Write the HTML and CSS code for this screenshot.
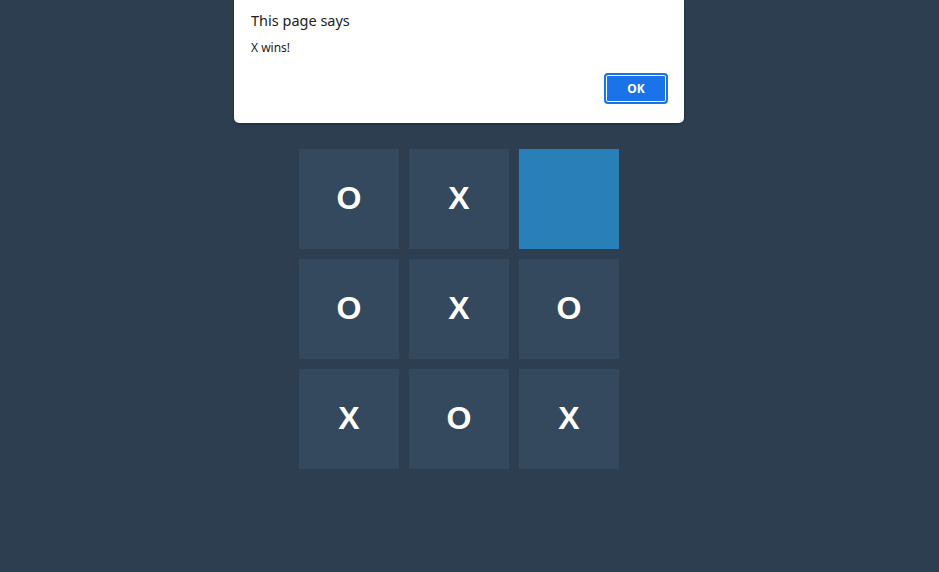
FILE: index.html
```html
<!DOCTYPE html>
<html>
<head>
<meta charset="utf-8">
<link rel="stylesheet" href="styles.css">
</head>
<body>
<main class="page">
  <div class="board">
    <div class="cell">O</div>
    <div class="cell">X</div>
    <div class="cell cell--active"></div>
    <div class="cell">O</div>
    <div class="cell">X</div>
    <div class="cell">O</div>
    <div class="cell">X</div>
    <div class="cell">O</div>
    <div class="cell">X</div>
  </div>
</main>
<div class="dialog">
  <div class="dialog__title">This page says</div>
  <div class="dialog__msg">X wins!</div>
  <div class="dialog__actions">
    <button class="dialog__ok">OK</button>
  </div>
</div>
</body>
</html>
```
FILE: styles.css
```css
html, body {
  margin: 0;
  padding: 0;
  height: 100%;
}
body {
  background: #2c3e50;
  font-family: "Liberation Sans", Arial, sans-serif;
  overflow: hidden;
}
.page {
  display: flex;
  justify-content: center;
  padding-top: 149px;
  padding-right: 21px;
}
.board {
  display: grid;
  grid-template-columns: repeat(3, 100px);
  grid-template-rows: repeat(3, 100px);
  gap: 10px;
}
.cell {
  background: #34495e;
  color: #fff;
  font-weight: bold;
  font-size: 32px;
  display: flex;
  align-items: center;
  justify-content: center;
  padding-bottom: 2px;
  box-sizing: border-box;
}
.cell--active {
  background: #2980b9;
}
.dialog {
  position: absolute;
  top: 0;
  left: 234px;
  width: 450px;
  height: 123px;
  box-sizing: border-box;
  background: #fff;
  border-radius: 0 0 5px 5px;
  box-shadow: 0 1px 3px rgba(0,0,0,0.35);
  padding: 10px 16px 0 17px;
  font-family: "Noto Sans", "Open Sans", sans-serif;
  color: #202124;
}
.dialog__title {
  font-size: 14.5px;
  line-height: 20px;
}
.dialog__msg {
  font-size: 12px;
  line-height: 16px;
  margin-top: 10px;
}
.dialog__actions {
  display: flex;
  justify-content: flex-end;
  margin-top: 17px;
}
.dialog__ok {
  width: 64px;
  height: 31px;
  background: #1a73e8;
  color: #fff;
  border: 2px solid #1a73e8;
  box-shadow: inset 0 0 0 1px #fff;
  border-radius: 4px;
  font-family: "Noto Sans", sans-serif;
  font-weight: bold;
  font-size: 12px;
  padding: 0;
}
```
